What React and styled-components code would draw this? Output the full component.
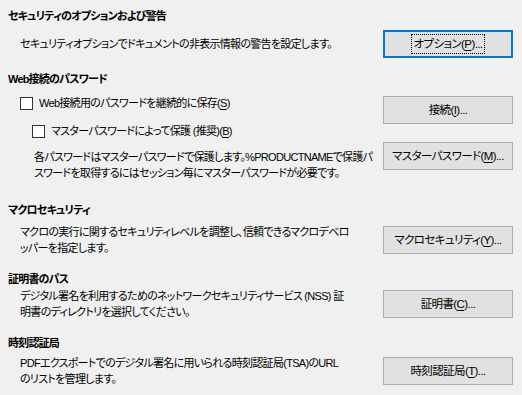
import React from "react";
import styled, { createGlobalStyle } from "styled-components";

const GlobalStyle = createGlobalStyle`
  html, body {
    margin: 0;
    padding: 0;
    background: #f0f0f0;
  }
  body {
    font-family: "Liberation Sans", "Noto Sans CJK JP", sans-serif;
    font-size: 11px;
    color: #000;
  }
`;

function App() {
  return (
    <>
      <GlobalStyle />
      <Page>
        <Section>
          <Heading>セキュリティのオプションおよび警告</Heading>
          <Row $top={5}>
            <Text>
              <Line>セキュリティオプションでドキュメントの非表示情報の警告を設定します。</Line>
            </Text>
            <Button $focused>
              <FocusRing>
                オプション(<u>P</u>)...
              </FocusRing>
            </Button>
          </Row>
        </Section>

        <Section>
          <Heading>Web接続のパスワード</Heading>
          <PasswordBlock>
            <LeftColumn>
              <CheckRow>
                <Checkbox />
                <span>
                  Web接続用のパスワードを継続的に保存(<u>S</u>)
                </span>
              </CheckRow>
              <CheckRow $indent>
                <Checkbox />
                <span>
                  マスターパスワードによって保護 (推奨)(<u>B</u>)
                </span>
              </CheckRow>
              <Text $indent>
                <Line>各パスワードはマスターパスワードで保護します。%PRODUCTNAMEで保護パ</Line>
                <Line>スワードを取得するにはセッション毎にマスターパスワードが必要です。</Line>
              </Text>
            </LeftColumn>
            <RightColumn>
              <Button>
                接続(<u>I</u>)...
              </Button>
              <Button>
                マスターパスワード(<u>M</u>)...
              </Button>
            </RightColumn>
          </PasswordBlock>
        </Section>

        <Section>
          <Heading>マクロセキュリティ</Heading>
          <Row $top={5}>
            <Text>
              <Line>マクロの実行に関するセキュリティレベルを調整し、信頼できるマクロデベロ</Line>
              <Line>ッパーを指定します。</Line>
            </Text>
            <Button>
              マクロセキュリティ(<u>Y</u>)...
            </Button>
          </Row>
        </Section>

        <Section $shift={2}>
          <Heading>証明書のパス</Heading>
          <Row $top={0}>
            <Text>
              <Line>デジタル署名を利用するためのネットワークセキュリティサービス (NSS) 証</Line>
              <Line>明書のディレクトリを選択してください。</Line>
            </Text>
            <Button>
              証明書(<u>C</u>)...
            </Button>
          </Row>
        </Section>

        <Section $shift={2}>
          <Heading>時刻認証局</Heading>
          <Row $top={3}>
            <Text>
              <Line>PDFエクスポートでのデジタル署名に用いられる時刻認証局(TSA)のURL</Line>
              <Line>のリストを管理します。</Line>
            </Text>
            <Button>
              時刻認証局(<u>T</u>)...
            </Button>
          </Row>
        </Section>
      </Page>
    </>
  );
}

const Page = styled.div`
  width: 522px;
  height: 395px;
  box-sizing: border-box;
  padding: 8px 9px 0 8px;
  display: flex;
  flex-direction: column;
  gap: 13px;
  font-feature-settings: "palt";
  letter-spacing: -0.7px;
  overflow: hidden;
`;

const Section = styled.section`
  display: flex;
  flex-direction: column;
  margin-top: ${(p) => p.$shift || 0}px;
`;

const Heading = styled.div`
  font-weight: bold;
  line-height: 17px;
  letter-spacing: -0.8px;
`;

const Row = styled.div`
  display: flex;
  align-items: center;
  justify-content: space-between;
  margin-top: ${(p) => p.$top}px;
  padding-left: 12px;
`;

const Text = styled.div`
  display: flex;
  flex-direction: column;
  line-height: 16px;
  padding-left: ${(p) => (p.$indent ? "14px" : "0")};
`;

const Line = styled.span`
  white-space: nowrap;
`;

const Button = styled.div`
  flex: none;
  width: 130px;
  height: 28px;
  box-sizing: border-box;
  display: flex;
  align-items: center;
  justify-content: center;
  background: #e1e1e1;
  border: ${(p) => (p.$focused ? "2px solid #0078d7" : "1px solid #adadad")};
  line-height: 16px;
  font-size: 11.5px;
  letter-spacing: -0.6px;
  white-space: nowrap;

  u {
    text-underline-offset: 2px;
  }
`;

const FocusRing = styled.span`
  outline: 1px dotted #000;
  outline-offset: 0;
  padding: 1px 2px;
`;

const PasswordBlock = styled.div`
  display: flex;
  justify-content: space-between;
  padding-left: 12px;
  padding-bottom: 8px;
`;

const LeftColumn = styled.div`
  display: flex;
  flex-direction: column;
  padding-top: 7px;
  gap: 12px;

  & > div:last-child {
    margin-top: -2px;
  }
`;

const RightColumn = styled.div`
  display: flex;
  flex-direction: column;
  padding-top: 8px;
  gap: 18px;
`;

const CheckRow = styled.div`
  display: flex;
  align-items: center;
  gap: 6px;
  line-height: 16px;
  padding-left: ${(p) => (p.$indent ? "12px" : "0")};

  u {
    text-underline-offset: 2px;
  }
`;

const Checkbox = styled.span`
  flex: none;
  width: 13px;
  height: 13px;
  box-sizing: border-box;
  background: #fff;
  border: 1px solid #333;
`;

export default App;
